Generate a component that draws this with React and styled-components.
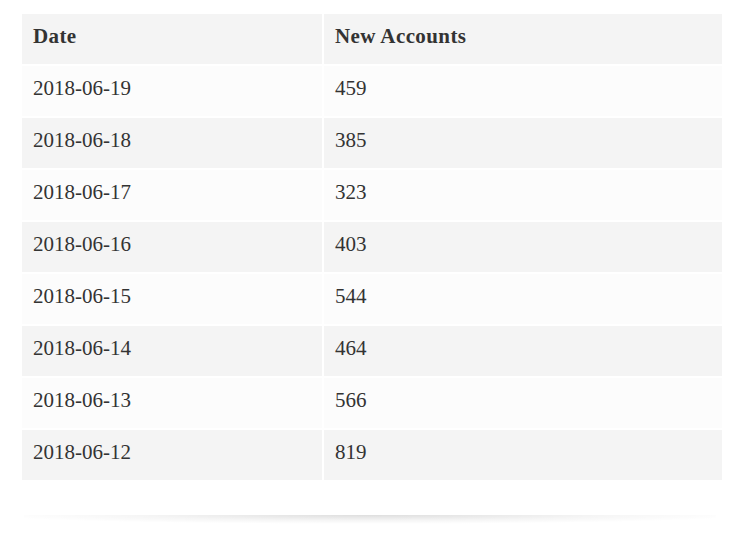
import React from "react";
import styled, { createGlobalStyle } from "styled-components";

const Global = createGlobalStyle`
  html, body { margin: 0; padding: 0; background: #fff; }
  body { font-family: "Liberation Serif", "Times New Roman", serif; }
`;

const Page = styled.div`
  padding: 12px 12px 0 20px;
  width: 704px;
`;

const Table = styled.table`
  width: 704px;
  border-collapse: separate;
  border-spacing: 2px;
  table-layout: fixed;
`;

const Th = styled.th`
  background: #f4f4f4;
  color: #333;
  font-weight: 700;
  font-size: 21px;
  line-height: 30px;
  letter-spacing: 0.4px;
  text-align: left;
  padding: 7px 11px 13px;
  vertical-align: top;
`;

const Row = styled.tr`
  background: ${(p) => (p.$alt ? "#f4f4f4" : "#fcfcfc")};
`;

const Td = styled.td`
  color: #333;
  font-size: 21px;
  line-height: 30px;
  padding: 7px 11px 13px;
  vertical-align: top;
`;

const Shadow = styled.div`
  margin: 33px 0 0 4px;
  width: 692px;
  height: 9px;
  background: radial-gradient(ellipse 55% 100% at 50% 0%, rgba(0,0,0,0.13), rgba(0,0,0,0.04) 60%, rgba(0,0,0,0) 100%);
`;

const data = [
  ["2018-06-19", 459],
  ["2018-06-18", 385],
  ["2018-06-17", 323],
  ["2018-06-16", 403],
  ["2018-06-15", 544],
  ["2018-06-14", 464],
  ["2018-06-13", 566],
  ["2018-06-12", 819],
];

export default function App() {
  return (
    <>
      <Global />
      <Page>
        <Table>
          <colgroup>
            <col style={{ width: 300 }} />
            <col style={{ width: 398 }} />
          </colgroup>
          <thead>
            <tr>
              <Th>Date</Th>
              <Th>New Accounts</Th>
            </tr>
          </thead>
          <tbody>
            {data.map(([d, n], i) => (
              <Row key={d} $alt={i % 2 === 1}>
                <Td>{d}</Td>
                <Td>{n}</Td>
              </Row>
            ))}
          </tbody>
        </Table>
        <Shadow />
      </Page>
    </>
  );
}
